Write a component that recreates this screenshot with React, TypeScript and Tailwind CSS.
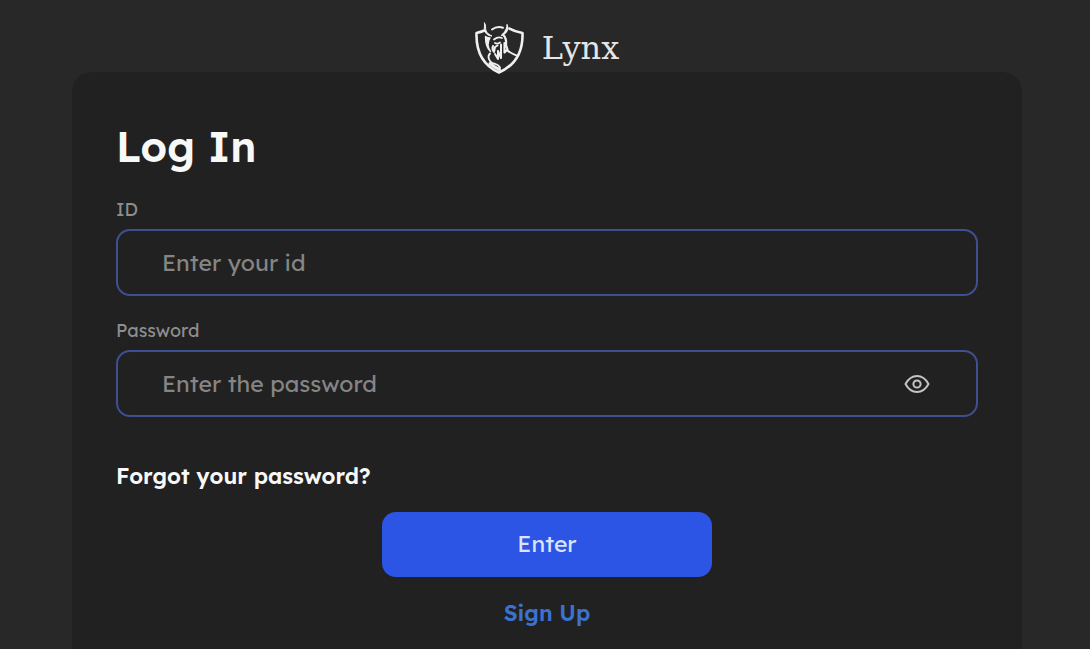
import React, { useState } from 'react'

const LynxLogo = () => (
  <svg
    viewBox="0 0 50 54"
    className="w-[50px] h-[54px]"
    fill="none"
    stroke="#f0f0f0"
    strokeLinecap="round"
    strokeLinejoin="round"
    aria-hidden="true"
  >
    {/* Shield */}
    <path
      d="M9.500 10.500c-2.500 1-5 1.800-8 2.500C1 30 6 44.500 24 52.500 42 44.500 48 30 47.500 13c-5-.8-9-2-13-4.300"
      strokeWidth="2.600"
    />
    <path d="M17 9.500c3-2.200 7.500-2.800 11-1.800" strokeWidth="2" />
    {/* Horns */}
    <path d="M9.500 3c2 3 .5 5 1.500 7.500.8 2.500 3 4 6 5.500-3.500 0-6.500-2-7.500-5.500C8.800 8 10 6 9.500 3Z" fill="#f0f0f0" stroke="#f0f0f0" strokeWidth="1" />
    <path d="M32 4.500c2 4 .5 8.500-5.500 11 2.500-2.500 6-5 5.500-11Z" fill="#f0f0f0" strokeWidth="1.200" />
    {/* Face */}
    <path d="M10.500 16.500c1.500 1 3 1.500 4.500 1.500-2.500 4-2.500 9 .5 13.500-3.500-3-5-9.500-5-15Z" fill="#f0f0f0" strokeWidth="1.400" />
    <path d="M19 19.500c2.500-2 5.500-2.500 8-1.500M20 23c1.500 1 3 1 5-.5" strokeWidth="1.800" />
    <path d="M18 26c-1 2-.5 4 1 6l1-5 2.500-1.500" strokeWidth="2" />
    <path d="M28 14.500c2.500 2.500 3.500 6.500 3 10.500l1.500 4.500-3 3V23" strokeWidth="2.200" />
    <path d="M26 24.500V38l-3-7v8l-3-5" strokeWidth="2" />
    {/* Shoulders */}
    <path d="M32.500 30.500c2.500 2.500 5.500 3.500 9 5" strokeWidth="1.800" />
    <path d="M15 33.500c-3 3-1 8 2.500 9.500 3 1 6 1.500 7.500 4.500" strokeWidth="1.800" />
    <path d="M15 43.500c3 2.500 6 4.500 9.500 6" strokeWidth="3" />
  </svg>
)

const EyeIcon = () => (
  <svg viewBox="0 0 26 20" className="w-[26px] h-5" fill="none" stroke="currentColor" strokeWidth="2" aria-hidden="true">
    <path
      d="M1.500 10C4.500 4.500 8.200 2 13 2s8.500 2.500 11.500 8c-3 5.500-6.700 8-11.500 8S4.500 15.500 1.500 10Z"
      strokeLinejoin="round"
    />
    <circle cx="13" cy="10" r="3.600" />
  </svg>
)

const labelClass = 'block mt-[23px] mb-[7px] text-[18px] leading-[24px] text-[#8e8e8e]'

const fieldClass =
  'block w-full h-[67px] pl-11 rounded-[14px] border-2 border-[#3e4f93] bg-transparent text-[23px] text-[#d0d0d0] placeholder:text-[#858585] outline-none focus:border-[#2d55e5]'

const App: React.FC = () => {
  const [id, setId] = useState('')
  const [password, setPassword] = useState('')
  const [showPassword, setShowPassword] = useState(false)

  return (
    <div className="min-h-screen flex flex-col pl-[72px] pr-[68px] bg-[#282828] font-['Lexend','Inter',sans-serif]">
      <header className="relative z-10 flex justify-center items-end gap-[17px] h-[74px] -mb-0.5">
        <LynxLogo />
        <span className="mb-1.5 font-['DejaVu_Serif',serif] text-[32px] leading-[40px] text-[#e6e6e6]">Lynx</span>
      </header>

      <main className="flex-1 rounded-t-[20px] bg-[#212121] px-11 pt-[47px]">
        <h1 className="text-[42px] leading-[56px] font-semibold text-[#f8f8f8]">Log In</h1>

        <form onSubmit={(e) => e.preventDefault()}>
          <label htmlFor="user-id" className={labelClass}>
            ID
          </label>
          <input
            id="user-id"
            type="text"
            value={id}
            onChange={(e) => setId(e.target.value)}
            placeholder="Enter your id"
            className={`${fieldClass} pr-11`}
          />

          <label htmlFor="password" className={labelClass}>
            Password
          </label>
          <div className="relative">
            <input
              id="password"
              type={showPassword ? 'text' : 'password'}
              value={password}
              onChange={(e) => setPassword(e.target.value)}
              placeholder="Enter the password"
              className={`${fieldClass} pr-24`}
            />
            <button
              type="button"
              onClick={() => setShowPassword(!showPassword)}
              aria-label="Show password"
              className="absolute inset-y-0 right-12 flex items-center text-[#c4c4c4]"
            >
              <EyeIcon />
            </button>
          </div>

          <a href="#forgot" className="block w-fit mt-[43px] text-[22px] leading-[32px] font-semibold text-[#f8f8f8]">
            Forgot your password?
          </a>

          <div className="flex flex-col items-center mt-5">
            <button
              type="submit"
              className="w-full max-w-[330px] h-[65px] rounded-[14px] bg-[#2d55e5] text-[23px] text-[#dbe4ff]"
            >
              Enter
            </button>
            <a href="#signup" className="mt-5 text-[22px] leading-[32px] font-semibold text-[#3c72cf]">
              Sign Up
            </a>
          </div>
        </form>
      </main>
    </div>
  )
}

export default App
